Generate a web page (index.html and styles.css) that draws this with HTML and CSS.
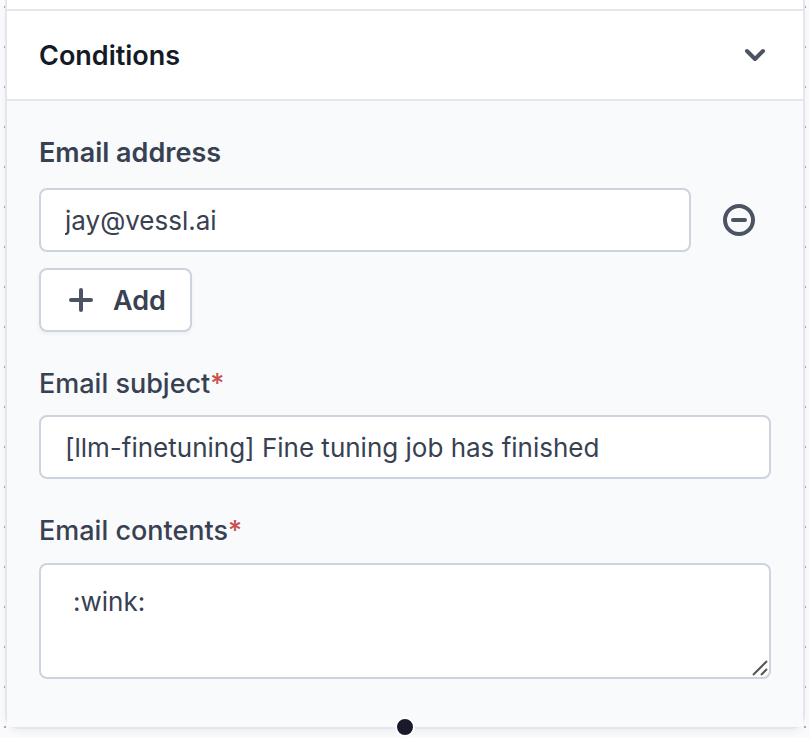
FILE: index.html
```html
<!DOCTYPE html>
<html lang="en">
<head>
<meta charset="utf-8">
<meta name="viewport" content="width=device-width, initial-scale=1">
<title>Conditions</title>
<link rel="stylesheet" href="styles.css">
</head>
<body>
<main class="canvas">
  <section class="card">
    <header class="card-header">
      <h2 class="card-title">Conditions</h2>
      <button class="icon-button" type="button" aria-label="Collapse">
        <svg width="24" height="24" viewBox="0 0 24 24"><path d="M4 8l8 8 8-8"/></svg>
      </button>
    </header>
    <form class="card-body">
      <div class="field field-address">
        <label class="label label-strong" for="address">Email address</label>
        <div class="address-list">
          <div class="address-row">
            <input class="control" id="address" type="text" value="jay@vessl.ai">
            <button class="icon-button" type="button" aria-label="Remove">
              <svg width="32" height="32" viewBox="0 0 32 32"><circle cx="16" cy="16" r="14"/><path d="M10 16h12"/></svg>
            </button>
          </div>
          <button class="add-button" type="button">
            <svg width="24" height="24" viewBox="0 0 24 24"><path d="M12 2v20M2 12h20"/></svg>
            <span class="add-text">Add</span>
          </button>
        </div>
      </div>
      <div class="field">
        <label class="label" for="subject">Email subject<span class="required">*</span></label>
        <input class="control" id="subject" type="text" value="[llm-finetuning] Fine tuning job has finished">
      </div>
      <div class="field field-contents">
        <label class="label" for="contents">Email contents<span class="required">*</span></label>
        <div class="area">
          <textarea class="control control-area" id="contents">:wink:</textarea>
          <svg class="grip" width="16" height="16" viewBox="0 0 16 16"><path d="M1 15L15 1M9 15l6-6"/></svg>
        </div>
      </div>
    </form>
    <span class="handle"></span>
  </section>
</main>
</body>
</html>
```
FILE: styles.css
```css
* {
  box-sizing: border-box;
}

body {
  margin: 0;
  font-family: Inter, "Liberation Sans", sans-serif;
  font-size: 27px;
  line-height: 40px;
  color: #384152;
}

.canvas {
  min-height: 100vh;
  padding: 0 7px;
  background-color: #fafafc;
  background-image: radial-gradient(circle, #a9abb5 1px, transparent 1px);
  background-size: 40px 40px;
  background-position: -15px -13px;
}

.card {
  position: relative;
  padding-top: 9px;
  border-radius: 0 0 12px 12px;
  background: #fff;
  box-shadow: 0 0 0 2px #e3e6ed, 0 4px 8px rgba(30, 35, 70, 0.06);
}

.card-header {
  display: flex;
  align-items: center;
  justify-content: space-between;
  min-height: 92px;
  padding: 0 36px 0 32px;
  border: solid #e3e6ed;
  border-width: 2px 0;
}

.card-title {
  margin: 0;
  padding-top: 2px;
  font-size: 27px;
  font-weight: 600;
  color: #141a26;
}

svg {
  display: block;
  fill: none;
  stroke: #4c5464;
  stroke-width: 4;
  stroke-linecap: round;
  stroke-linejoin: round;
}

button {
  font: inherit;
  color: inherit;
  cursor: pointer;
}

.icon-button {
  flex: none;
  padding: 0;
  border: 0;
  background: none;
}

.card-body {
  display: flex;
  flex-direction: column;
  gap: 32px;
  padding: 32px 32px 48px;
  background: #f9fafc;
}

.field {
  display: flex;
  flex-direction: column;
  gap: 11px;
}

.field-address {
  gap: 15px;
}

.field-contents {
  gap: 12px;
}

.label {
  font-weight: 500;
}

.label-strong {
  font-weight: 600;
}

.required {
  color: #c9504c;
}

.address-list {
  display: flex;
  flex-direction: column;
  align-items: flex-start;
  gap: 16px;
}

.address-row {
  display: flex;
  align-items: center;
  gap: 32px;
  width: 100%;
  padding-right: 16px;
}

.control {
  display: block;
  flex: 1;
  width: 100%;
  min-width: 0;
  min-height: 64px;
  padding: 2px 24px 0;
  border: 2px solid #cdd4df;
  border-radius: 8px;
  background: #fff;
  color: inherit;
  font: inherit;
  font-size: 26px;
}

.area {
  position: relative;
}

.control-area {
  height: 116px;
  padding: 17px 32px;
  resize: none;
}

.grip {
  position: absolute;
  right: 3px;
  bottom: 3px;
  stroke: #555;
  stroke-width: 2;
  stroke-linecap: butt;
  pointer-events: none;
}

.add-button {
  display: flex;
  align-items: center;
  gap: 20px;
  height: 64px;
  padding: 0 24px 0 28px;
  border: 2px solid #cdd4df;
  border-radius: 8px;
  background: #fff;
  box-shadow: 0 2px 4px rgba(16, 24, 40, 0.05);
  font-weight: 600;
}

.add-text {
  padding-top: 2px;
}

.handle {
  position: absolute;
  left: 50%;
  bottom: -10px;
  width: 20px;
  height: 20px;
  border: 2px solid #fff;
  border-radius: 50%;
  background: #1a192b;
  transform: translateX(-50%);
}
```
